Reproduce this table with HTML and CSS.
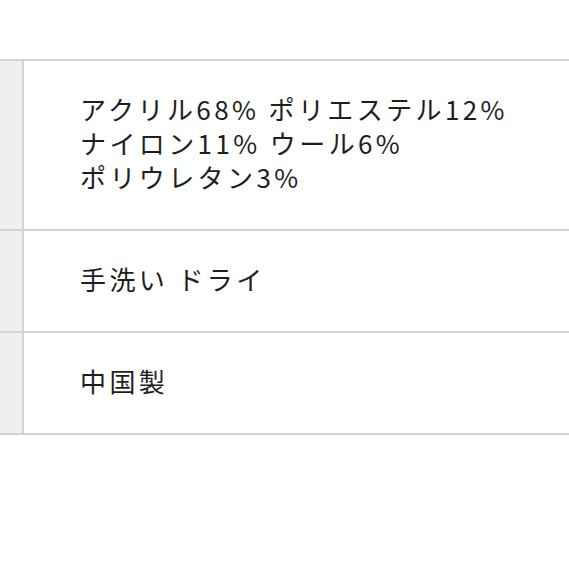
FILE: index.html
```html
<!DOCTYPE html>
<html lang="ja">
<head>
<meta charset="utf-8">
<link rel="stylesheet" href="styles.css">
</head>
<body>
<div class="frame">
<table class="spec">
  <tr>
    <th class="label"></th>
    <td class="value">アクリル68% ポリエステル12%<br>ナイロン11% ウール6%<br>ポリウレタン3%</td>
  </tr>
  <tr>
    <th class="label"></th>
    <td class="value">手洗い ドライ</td>
  </tr>
  <tr>
    <th class="label"></th>
    <td class="value">中国製</td>
  </tr>
</table>
</div>
</body>
</html>
```
FILE: styles.css
```css
html, body {
  margin: 0;
  padding: 0;
  background: #ffffff;
}
body {
  font-family: "Noto Sans CJK JP", "Noto Sans", sans-serif;
  color: #1e1e1e;
}
.frame {
  width: 569px;
  height: 569px;
  padding-top: 59px;
  box-sizing: border-box;
  overflow: hidden;
}
.spec {
  border-collapse: collapse;
  width: 580px;
  margin-left: -2px;
}
.label {
  width: 22px;
  padding: 0;
  background: #efefef;
  border: 2px solid #d3d3d3;
}
.value {
  border-top: 2px solid #d3d3d3;
  border-bottom: 2px solid #d3d3d3;
  border-left: 2px solid #d3d3d3;
  border-right: 0;
  padding: 31px 0 35px 56px;
  font-size: 26px;
  line-height: 34px;
  font-weight: 400;
  letter-spacing: 3.4px;
  white-space: nowrap;
}
```
